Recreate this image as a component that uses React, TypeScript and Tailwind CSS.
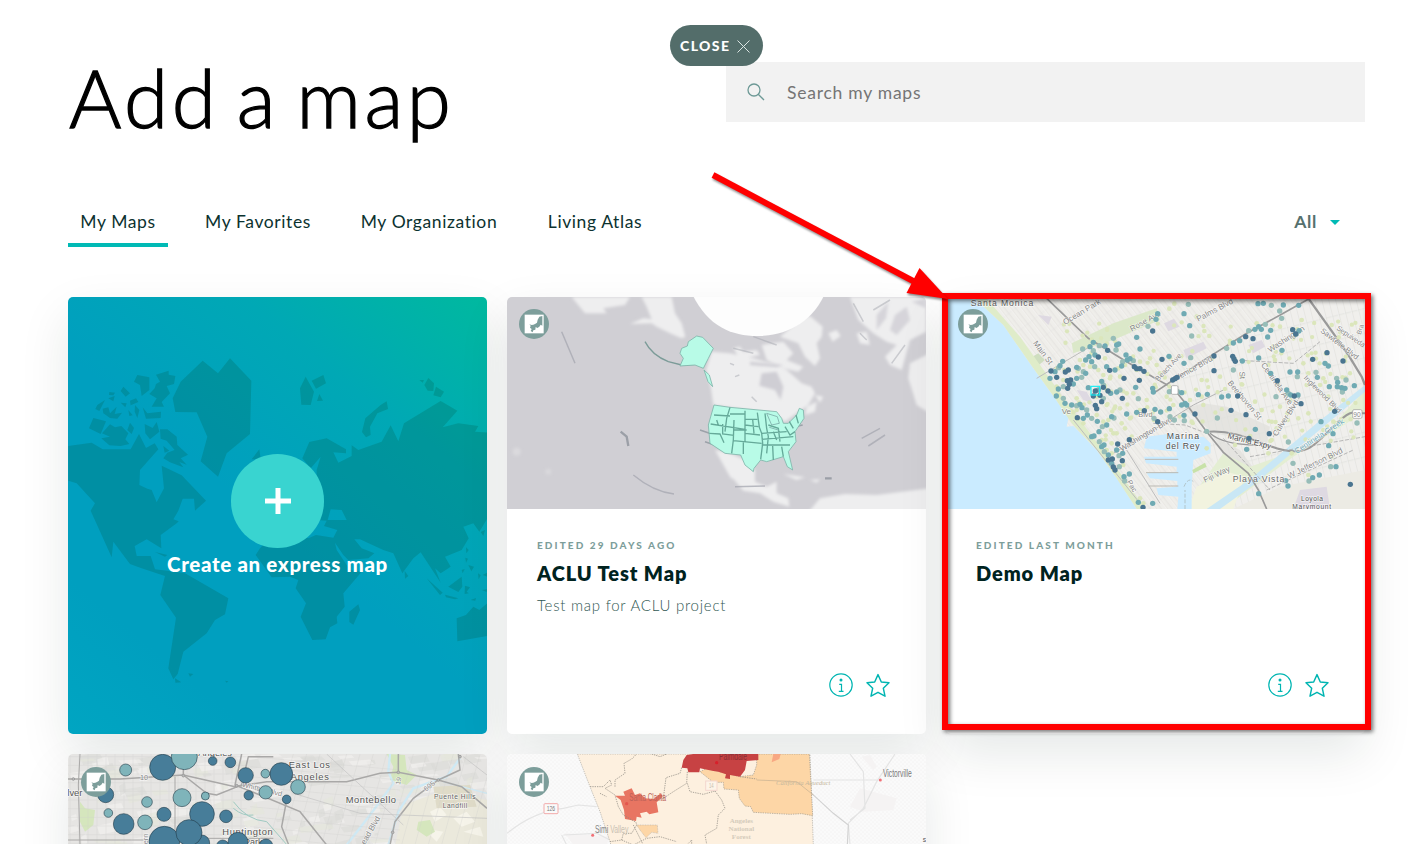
import type { ReactNode } from "react";

function randomizer(seed: number) {
  let s = seed;
  return () => {
    s = (s * 16807) % 2147483647;
    return s / 2147483647;
  };
}

const LAND =
  "M25,468 L95,458 L128,478 L212,478 L237,432 L258,474 L284,460 L295,478 L240,540 L238,585 L262,596 L275,600 L290,637 L312,595 L305,527 L365,556 L438,632 L405,662 L402,626 L368,626 L355,662 L340,688 L356,694 L350,700 L302,735 L304,775 L260,748 L224,768 L230,798 L272,798 L285,838 L320,842 L375,850 L505,925 L495,973 L465,990 L440,1030 L370,1085 L353,1152 L340,1168 L325,1135 L348,983 L301,915 L315,858 L245,835 L210,822 L160,755 L155,802 L92,662 L105,640 L50,580 L25,572 Z M803,690 L812,658 L845,660 L860,690 Z M727,505 L748,456 L800,445 L858,478 L858,490 L820,487 L835,518 L875,498 L875,466 L895,480 L965,455 L992,406 L1015,454 L1032,400 L1142,333 L1192,362 L1148,412 L1195,400 L1255,408 L1245,425 L1285,428 L1285,680 L1258,725 L1240,700 L1210,710 L1226,745 L1205,780 L1155,800 L1172,830 L1142,850 L1125,835 L1142,878 L1082,787 L1060,805 L1027,850 L1000,790 L970,780 L900,748 L883,748 L905,775 L943,790 L925,805 L865,810 L850,795 L825,758 L830,780 L870,840 L905,845 L850,910 L854,950 L830,980 L832,1000 L810,1012 L797,1048 L757,1050 L722,980 L738,940 L707,895 L715,870 L690,860 L635,862 L587,795 L600,775 L650,720 L745,745 L768,735 L820,743 L832,720 L792,708 L800,692 L770,690 L770,540 L782,500 L752,535 Z";

const ISLANDS =
  "M428,212 L474,250 L510,205 L574,272 L570,432 L500,490 L474,560 L422,514 L442,440 L410,367 L346,366 L338,325 L362,275 Z M575,508 L598,478 L602,508 Z M737,260 L720,295 L724,344 L752,345 L762,305 Z M755,272 L790,255 L798,280 L768,296 Z M778,312 L789,332 L771,333 Z M962,345 L980,334 L984,357 L952,370 L930,410 L932,435 L918,442 L906,426 L916,385 Z M1078,270 L1092,270 L1088,278 Z M1105,264 L1122,280 L1120,303 L1103,302 L1093,285 Z M1128,290 L1152,305 L1142,322 L1120,316 Z M232,255 L268,262 L268,300 L245,318 L240,285 L222,275 Z M288,254 L326,242 L326,254 L346,258 L342,282 L320,288 L330,310 L305,336 L312,350 L275,350 L290,325 L268,312 L284,295 L288,282 L300,275 Z M248,352 L262,370 L303,365 L302,384 L258,386 Z M190,290 L210,310 L197,320 L182,303 Z M148,306 L165,308 L160,316 L147,315 Z M145,325 L164,318 L160,334 Z M112,345 L135,330 L118,363 L106,357 Z M128,356 L145,352 L150,370 L170,350 L164,372 L186,368 L172,386 L150,384 L130,370 Z M182,338 L200,340 L196,352 Z M210,332 L228,325 L235,336 L212,346 Z M225,345 L238,360 L232,384 L224,365 Z M205,360 L218,376 L208,378 Z M100,384 L138,394 L122,432 L87,415 Z M150,403 L165,412 L184,408 L205,430 L196,448 L208,462 L182,468 L148,466 L124,445 L150,440 L126,430 Z M210,398 L222,414 L215,432 L202,420 Z M254,402 L278,414 L290,396 L298,425 L270,448 L256,430 Z M300,418 L322,418 L350,440 L352,465 L384,494 L362,505 L380,524 L358,516 L370,532 L330,517 L310,505 L322,488 L344,480 L320,452 L302,446 Z M310,468 L328,482 L314,488 Z M285,786 L322,795 L315,800 Z M895,943 L900,960 L880,1004 L868,996 L868,965 Z M1034,843 L1045,858 L1035,866 Z M1100,865 L1148,908 L1140,915 Z M1155,914 L1195,925 L1185,928 L1158,922 Z M1165,890 L1205,860 L1207,890 L1195,906 Z M1215,887 L1230,892 L1220,905 L1226,910 L1214,912 Z M1190,985 L1218,975 L1240,950 L1258,960 L1282,940 L1282,1038 L1192,1054 Z M1218,772 L1226,780 L1219,790 Z M1216,803 L1224,806 L1218,818 Z M1225,825 L1242,830 L1234,844 Z M1205,840 L1214,837 L1208,850 Z M1254,850 L1262,856 L1256,868 Z M1268,855 L1282,848 L1282,860 Z M1262,726 L1275,720 L1270,738 Z M345,1165 L364,1177 L346,1178 Z M385,1150 L400,1152 L390,1160 Z M495,1172 L505,1174 L500,1178 Z M1232,930 L1248,924 L1246,932 Z M1266,900 L1281,898 L1280,906 Z";

function WorldArt() {
  return (
    <svg className="absolute inset-0 h-full w-full" viewBox="24 21 1257 1311" preserveAspectRatio="none">
      <g fill="#005f50" fillOpacity=".25" fillRule="evenodd">
        <path d={LAND} />
        <path d={ISLANDS} />
      </g>
    </svg>
  );
}

function NorthAmericaMap() {
  return (
    <svg className="block h-[212px] w-full" viewBox="21 21 1257 636" preserveAspectRatio="none">
      <defs>
        <filter id="soft" x="-5%" y="-5%" width="110%" height="110%">
          <feGaussianBlur stdDeviation="4.5" />
        </filter>
        <filter id="softer" x="-5%" y="-5%" width="110%" height="110%">
          <feGaussianBlur stdDeviation="2.2" />
        </filter>
      </defs>
      <rect x="21" y="21" width="1257" height="636" fill="#d0cfd4" />
      <g fill="#eeeeef" filter="url(#soft)">
        <path d="M215,21 L390,21 L375,45 L310,55 L320,70 L255,70 Z" />
        <path d="M425,21 L515,21 L525,70 L545,100 L556,140 L545,145 L515,132 L470,110 L455,100 L390,102 L430,85 L455,88 L440,50 Z" />
        <path d="M635,185 L690,190 L760,205 L830,225 L860,240 L885,262 L905,280 L935,290 L945,310 L925,345 L890,370 L855,395 L820,372 L640,345 L632,290 L618,240 Z" />
        <path d="M700,175 L720,170 L730,185 L770,180 L780,195 L720,208 Z M785,165 L850,155 L880,190 L860,210 L910,230 L895,245 L850,235 L800,210 Z" />
        <path d="M905,85 L930,78 L968,110 L965,140 L950,160 L960,205 L945,228 L915,200 L895,160 L840,140 Z" />
        <path d="M985,130 L1010,120 L1022,138 L998,155 Z M1050,21 L1278,21 L1278,125 L1230,150 L1215,205 L1205,240 L1170,225 L1155,200 L1190,165 L1160,155 L1120,130 L1075,90 Z M1070,130 L1100,125 L1110,165 L1080,160 Z" />
        <path d="M1230,220 L1290,190 L1290,370 L1250,345 L1225,265 Z" />
        <path d="M645,480 L690,490 L735,510 L765,540 L765,575 L800,590 L830,575 L830,610 L865,625 L868,650 L820,635 L780,610 L730,602 L695,560 L675,510 L700,570 L690,560 Z" />
        <path d="M925,667 L960,625 L1035,612 L1130,615 L1290,595 L1290,667 Z M850,552 L915,562 L890,570 Z M930,570 L960,568 L950,578 Z" />
        <path d="M920,350 L950,335 L945,365 L915,375 Z M945,315 L970,320 L960,338 Z" />
        <circle cx="50" cy="485" r="12" fillOpacity=".35" />
        <circle cx="145" cy="545" r="9" fillOpacity=".3" />
      </g>
      <g fill="#cfced4" filter="url(#soft)">
        <path d="M785,250 L830,245 L850,290 L842,330 L825,300 L778,287 Z" />
        <path d="M750,215 L850,225 L830,232 L750,225 Z" />
        <path d="M1185,75 L1220,50 L1230,90 L1190,135 L1170,120 Z M1130,75 L1165,35 L1158,85 L1130,120 Z M1235,35 L1278,25 L1278,55 Z" fillOpacity=".8" />
      </g>
      <path d="M578,15 C625,110 695,138 772,138 C850,138 930,105 973,15 Z" fill="#fdfdfd" filter="url(#softer)" />
      <g stroke="#5f8a85" fill="none" filter="url(#softer)" opacity=".75">
        <path d="M435,155 Q455,195 505,215 L545,225 L600,222" strokeWidth="4" />
        <path d="M600,420 L635,432 M615,455 L650,467 M885,410 L908,405" strokeWidth="5" stroke="#8b939b" />
      </g>
      <g stroke="#a6a7b0" strokeWidth="4.5" fill="none" filter="url(#softer)">
        <path d="M185,125 L225,220 M400,555 Q460,605 522,612 M1085,445 L1140,415 M1105,468 L1155,435 M705,590 L795,588" strokeOpacity=".75" />
        <path d="M362,425 L380,440 L385,468 M975,565 H995" stroke="#8d949b" strokeWidth="7" strokeOpacity=".8" />
        <path d="M760,140 L830,165 M700,175 L760,190 M1060,40 L1090,95 M1120,60 L1170,30 M1175,220 L1215,165 M1080,130 L1100,150 M690,220 L702,225 M755,320 L770,335 M705,260 L718,255" strokeOpacity=".5" />
      </g>
      <g fill="#b8fbe7" stroke="#7fb5aa" strokeWidth="2.5" filter="url(#softer)">
        <path d="M590,138 L608,142 L640,175 L625,205 L610,235 L585,225 L540,228 L550,205 L540,190 L545,175 L562,168 L565,155 Z" />
        <path d="M612,240 L628,255 L638,290 L624,275 Z" />
        <path d="M642,345 L690,352 L830,365 L845,385 L850,400 L865,400 L890,375 L898,355 L910,360 L912,385 L885,425 L888,455 L865,485 L878,540 L862,530 L850,500 L800,515 L782,510 L762,535 L760,545 L735,525 L722,495 L675,490 L630,460 L625,405 Z" />
      </g>
      <path
        d="M642,375 L690,378 M690,352 L680,385 L675,425 M632,402 L735,418 M628,430 L660,432 L672,458 M668,402 V432 L702,436 M702,390 L700,450 L695,490 M735,362 V455 M737,388 H772 M735,405 L775,410 M702,420 H740 M735,430 L780,435 M700,452 L785,460 M730,455 V492 M772,368 L778,412 L785,430 L788,460 L782,508 M795,370 L800,415 L805,440 L800,490 M785,430 L860,425 M785,448 L880,440 M785,465 L870,465 M805,405 L835,415 L840,455 M820,425 L830,450 M818,468 L820,510 M845,470 L850,500 M855,410 L870,435 L885,425 M868,395 L880,415 M888,375 L895,400 M690,372 H735 M650,390 L655,405 M758,388 L762,430"
        stroke="#65a999"
        strokeWidth="4"
        fill="none"
        filter="url(#softer)"
      />
      <path d="M800,370 L832,380 L838,400 L815,405 Z M808,412 L835,420" stroke="#86b9b2" strokeWidth="3" fill="none" filter="url(#softer)" />
    </svg>
  );
}

const DARK_DOTS =
  "638,123 503,181 475,201 385,240 376,246 333,243 382,272 392,270 388,283 383,295 509,241 552,265 598,271 583,230 590,236 600,236 612,244 666,208 698,270 705,266 711,262 822,242 822,198 939,146 917,140 1058,119 1067,132 878,199 882,207 886,214 1012,272 1118,208 1161,188 1209,213 893,318 873,361 918,374 988,431 927,445 1184,364 1083,341 1063,318 653,395 613,362 547,325 504,303 466,346 470,356 485,335 412,383 533,462 547,512 517,507 520,531 525,540 568,449 505,510 1231,583 609,652 466,303 460,318 480,316 765,372 350,262 490,292";
const MID_DOTS =
  "745,43 732,71 749,107 755,138 653,71 648,88 624,109 590,142 600,177 428,177 450,170 460,157 478,167 530,165 536,162 528,180 558,195 562,210 548,215 545,228 570,206 580,212 687,199 732,220 752,203 880,159 899,152 926,122 945,118 956,110 976,103 964,118 983,141 994,46 954,41 970,40 1019,63 1030,45 1076,46 1025,85 992,121 1077,122 1069,132 1026,181 956,204 880,240 907,213 1050,246 1072,260 1073,246 992,250 1008,320 1074,315 1040,300 1045,310 1052,315 1132,262 1128,247 1155,220 1165,228 1190,265 1193,277 1205,293 1218,270 1243,287 1192,290 1207,306 1168,290 1143,395 1251,399 1179,431 1166,467 1045,456 946,418 920,478 800,424 845,321 865,318 832,384 802,313 775,314 733,392 732,376 688,356 690,380 725,345 662,366 642,385 638,295 640,306 688,305 700,300 587,292 595,326 590,367 560,372 522,384 515,380 500,405 487,410 477,425 472,394 455,385 430,385 442,375 440,360 426,353 420,343 410,347 395,345 375,340 370,325 349,318 355,297 370,290 400,282 410,265 425,262 445,293 437,250 430,245 410,232 437,210 415,235 360,227 368,214 356,233 345,245 330,265 464,230 455,215 485,274 490,285 512,310 530,306 540,300 465,195 447,200 460,182 500,230 525,240 520,145 495,168 475,300 490,325 455,440 462,438 478,455 485,470 492,465 493,485 505,495 530,480 537,497 548,490 515,520 538,530 552,560 568,552 554,573 638,640 595,637 1059,520 1037,572 1044,588 1107,573 1118,563 1138,555 1172,530 1188,530 956,611 703,390 645,358 725,308 713,305 735,340 740,345 860,175 1215,295";
const PALE_DOTS =
  "688,56 703,41 793,123 808,138 770,80 870,160 1020,110 1060,145 1000,170 1005,210 985,225 1090,220 1105,250 1100,285 1140,285 1150,265 1210,330 1165,320 1040,315 1020,350 965,360 945,335 1010,415 1075,385 1105,370 1150,420 1180,395 995,450 885,465 790,345 750,330 785,320 755,395 700,345 680,320 660,250 650,225 630,205 600,215 590,240 555,225 540,260 535,235 495,205 475,240 450,230 430,225 420,210 490,255 510,265 560,310 580,310 620,330 540,355 590,370 570,385 545,400 555,415 520,430 530,430 575,440 490,395 505,390 430,400 415,385 470,375 410,360 395,365 350,290 370,270 500,300 485,450 515,460 500,480 515,490 550,525 600,625 610,640 1055,490 1175,500 1105,555 985,490 800,475 1085,90 1175,105 950,100 750,240 785,270 840,260 905,260 530,180 455,190 410,325 470,320 500,345 600,360";

function parseDots(list: string) {
  return list.split(" ").map((pair) => pair.split(",").map(Number));
}

function Label({
  x,
  y,
  size = 24,
  rotate = 0,
  fill = "#888",
  children,
  length,
}: {
  x: number;
  y: number;
  size?: number;
  rotate?: number;
  fill?: string;
  children: string;
  length?: number;
}) {
  return (
    <text
      x={x}
      y={y}
      fontSize={size}
      fill={fill}
      textLength={length}
      fontFamily="'Liberation Sans', sans-serif"
      transform={`rotate(${rotate} ${x} ${y})`}
      stroke="#fff"
      strokeOpacity=".65"
      strokeWidth="4"
      paintOrder="stroke"
    >
      {children}
    </text>
  );
}

function VeniceMap() {
  const rnd = randomizer(41);
  const scatter = Array.from({ length: 150 }, () => {
    const x = 350 + rnd() * 900;
    const y = 90 + rnd() * 370;
    return [x, y];
  }).filter(([x, y]) => x > 0.8 * y + 100 && (y < 400 || x > 800 || x < 600));
  return (
    <svg className="block h-[212px] w-full" viewBox="18 21 1257 636" preserveAspectRatio="none">
      <defs>
        <pattern id="blocksA" width="26" height="60" patternUnits="userSpaceOnUse" patternTransform="rotate(-38)">
          <rect width="26" height="60" fill="#efeeea" />
          <path d="M0,0 H26 M0,0 V60" stroke="#fff" strokeWidth="4" />
          <path d="M2,2 H26 M3,0 V60 M15,0 V60" stroke="#dad9d5" strokeWidth="1.6" />
        </pattern>
        <pattern id="blocksB" width="20" height="72" patternUnits="userSpaceOnUse" patternTransform="rotate(-14)">
          <rect width="20" height="72" fill="#f0efec" />
          <path d="M0,0 H20 M0,0 V72" stroke="#fff" strokeWidth="4" />
          <path d="M2,2 H20 M3,0 V72" stroke="#d5d4d0" strokeWidth="1.8" />
        </pattern>
      </defs>
      <rect x="18" y="21" width="1257" height="636" fill="url(#blocksA)" />
      <path d="M700,280 L1100,21 H1275 V657 H850 L800,425 Z" fill="url(#blocksB)" />
      <path d="M730,355 L790,340 L860,350 L990,410 L980,460 L820,430 Z M820,440 L900,480 L960,560 L870,520 Z" fill="#e0dfdc" fillOpacity=".7" />
      <path d="M880,657 L1020,590 L1275,540 V657 Z" fill="#ecebe4" />
      <path d="M1060,657 L1080,600 L1160,590 L1170,657 Z" fill="#ded9e2" />
      <path d="M395,160 L520,100 L650,55 L660,90 L520,150 L400,190 Z" fill="#dbe8c9" />
      <path d="M672,100 L702,86 L718,110 L685,124 Z M730,180 L790,155 L800,175 L740,205 Z M925,165 L965,150 L975,170 L940,190 Z M295,75 L335,80 L325,105 Z M410,300 L440,305 L460,340 L430,330 Z" fill="#ded9e2" />
      <path d="M270,205 L295,190 L315,210 L290,230 Z" fill="#cfdec0" />
      <path d="M770,600 L850,490 L930,530 L1130,460 L1275,300 V365 L1060,500 L850,657 H750 Z" fill="#e4eed3" />
      <path d="M745,657 L770,590 L860,545 L915,560 L880,657 Z" fill="#f2f3df" />
      <path d="M800,657 L930,568 L1130,400 L1275,285 V305 L1145,415 L940,585 L840,657 Z" fill="#c9e7f5" />
      <path d="M18,21 H100 L190,105 L280,235 L345,325 L385,385 L380,410 L400,408 L470,480 L530,565 L590,657 H18 Z" fill="#caebff" />
      <path d="M100,21 L190,105 L280,235 L345,325 L395,400 L470,480 L530,565 L590,657 H615 L545,555 L450,430 L360,310 L240,140 L135,21 Z" fill="#dfecc9" />
      <path d="M620,440 L700,430 L720,445 L790,440 L812,460 L812,490 L760,510 L755,590 V657 H712 L715,620 L655,615 L650,595 L712,590 V573 L630,565 L620,550 L710,545 V530 L618,520 L612,500 L710,500 V485 L612,475 Z" fill="#caebff" />
      <path d="M757,540 L795,518 L800,530 L760,550 Z" fill="#c8e2a8" />
      <path d="M615,508 H715 M618,548 H715 M625,588 H715" stroke="#bbb9b2" strokeWidth="3" />
      <path d="M732,590 Q745,560 760,575 M735,657 V600" stroke="#b2c5ca" strokeWidth="3" strokeDasharray="12 5" fill="none" />
      <g fill="none" stroke="#9a9a9a">
        <path d="M320,25 L445,145 L560,215 L640,262 L700,295 L745,350 L800,425 L850,487 L925,550 L955,600 L980,657" strokeWidth="5" />
        <path d="M640,310 L700,270 L800,205 L920,130 L1030,70 L1110,25" strokeWidth="5" />
        <path d="M1105,25 L1180,130 L1225,195 L1265,260 L1275,285" strokeWidth="7" />
        <path d="M808,425 C900,420 960,465 1030,480 S1120,470 1180,410 S1240,370 1275,370" strokeWidth="6" />
        <path d="M810,430 Q850,465 950,465" strokeWidth="4" />
        <path d="M520,490 L640,420 L760,345 L850,300" strokeWidth="3" stroke="#b5b5b5" />
        <path d="M400,390 L600,640 M290,265 L450,170 M560,480 L660,640" strokeWidth="3" stroke="#bdbdbd" />
        <path d="M640,400 L735,405 L800,430 M850,445 L990,600 M1000,440 L1080,320 M930,500 L1275,440 M880,210 L1060,220 L1140,155 M980,600 L1240,480" strokeWidth="2.5" stroke="#aaa" strokeDasharray="12 5" />
      </g>
      <g fill="#dbe6bb">
        {scatter.map(([x, y], i) => (
          <circle key={i} cx={x} cy={y} r="6.5" />
        ))}
        {parseDots(PALE_DOTS).map(([x, y], i) => (
          <circle key={i} cx={x} cy={y} r="7" />
        ))}
      </g>
      <Label x={278} y={160} rotate={53}>Main St</Label>
      <Label x={375} y={105} rotate={-31}>Ocean Park</Label>
      <Label x={575} y={125} rotate={-29}>Rose Ave</Label>
      <Label x={775} y={95} rotate={-28}>Palms Blvd</Label>
      <Label x={710} y={272} rotate={-29}>Venice Blvd</Label>
      <Label x={655} y={275} rotate={-47} size={22}>Beach Ave</Label>
      <Label x={990} y={188} rotate={-33}>Washington</Label>
      <Label x={1140} y={125} rotate={38} size={23}>Sawtelle Blvd</Label>
      <Label x={1188} y={118} rotate={34} size={22} length={98}>Sepulveda</Label>
      <Label x={1262} y={135} rotate={-72} size={20}>Bra</Label>
      <Label x={862} y={280} rotate={50}>Beethoven St</Label>
      <Label x={962} y={225} rotate={55}>Centinela Ave</Label>
      <Label x={898} y={245} rotate={85}>St</Label>
      <Label x={1090} y={265} rotate={45} size={22}>Inglewood Blvd</Label>
      <Label x={1010} y={440} rotate={-57}>Culver Blvd</Label>
      <Label x={545} y={485} rotate={-31}>Washington Blvd</Label>
      <Label x={595} y={382} rotate={0} size={22}>Blvd</Label>
      <Label x={1070} y={492} rotate={-33} fill="#73aebe">Centinela Creek</Label>
      <Label x={1048} y={566} rotate={-26} length={180}>W Jefferson Blvd</Label>
      <Label x={795} y={578} rotate={-25}>Fiji Way</Label>
      <Label x={862} y={445} rotate={14} fill="#555">Marina Expy</Label>
      <Label x={560} y={575} rotate={60} size={22}>Pac</Label>
      <Label x={365} y={372}>Ve</Label>
      <g fill="#97bdb8">
        {parseDots(MID_DOTS).filter((_, i) => i % 3 === 0).map(([x, y], i) => (
          <circle key={i} cx={x} cy={y} r="8" />
        ))}
      </g>
      <g fill="#6faab3">
        {parseDots(MID_DOTS).filter((_, i) => i % 3 !== 0).map(([x, y], i) => (
          <circle key={i} cx={x} cy={y} r="8" />
        ))}
      </g>
      <g fill="#4a7590">
        {parseDots(DARK_DOTS).map(([x, y], i) => (
          <circle key={i} cx={x} cy={y} r="8" />
        ))}
      </g>
      <rect x="453" y="289" width="26" height="26" fill="none" stroke="#14eef5" strokeWidth="3.5" />
      <rect x="1238" y="359" width="28" height="26" rx="4" fill="#fff" stroke="#999" strokeWidth="2" />
      <Label x={1240} y={380} size={20}>90</Label>
      <rect x="694" y="287" width="20" height="26" rx="4" fill="#fff" stroke="#999" strokeWidth="2" />
      <Label x={92} y={47} size={26} fill="#5e5e5e" length={188}>Santa Monica</Label>
      <Label x={680} y={446} size={26} fill="#4e4e4e" length={97}>Marina</Label>
      <Label x={677} y={478} size={26} fill="#4e4e4e" length={102}>del Rey</Label>
      <Label x={878} y={577} size={26} fill="#6a6a6a" length={155}>Playa Vista</Label>
      <Label x={1083} y={634} size={20} fill="#555" length={66}>Loyola</Label>
      <Label x={1057} y={657} size={20} fill="#555" length={116}>Marymount</Label>
    </svg>
  );
}

const BUBBLES: [number, number, number, boolean][] = [
  [137, 149, 24, true],
  [197, 75, 18, false],
  [308, 67, 39, true],
  [373, 35, 39, false],
  [458, 48, 13, true],
  [511, 52, 16, true],
  [557, 91, 23, true],
  [616, 86, 13, false],
  [664, 87, 34, true],
  [714, 126, 22, false],
  [617, 142, 20, false],
  [566, 151, 14, true],
  [680, 163, 13, true],
  [366, 158, 27, false],
  [436, 153, 12, false],
  [261, 171, 16, false],
  [145, 204, 13, false],
  [191, 237, 31, true],
  [255, 232, 22, false],
  [312, 208, 21, true],
  [426, 207, 37, true],
  [498, 214, 19, true],
  [313, 290, 46, true],
  [425, 294, 24, true],
  [387, 263, 39, true],
  [488, 303, 18, true],
  [534, 292, 30, true],
  [618, 302, 20, true],
];

function LosAngelesMap() {
  const rnd = randomizer(97);
  const patches = Array.from({ length: 190 }, () => [24 + rnd() * 1257, 27 + rnd() * 290, 10 + rnd() * 55, 5 + rnd() * 25, rnd()]);
  return (
    <svg className="block h-[212px] w-full" viewBox="24 27 1257 636" preserveAspectRatio="none">
      <rect x="24" y="27" width="1257" height="636" fill="#e6e5e3" />
      {patches.map(([x, y, w, h, t], i) => (
        <path
          key={i}
          d={`M${x},${y} l${w},${-h * 0.4} l${w * 0.2},${h} l${-w},${h * 0.4} Z`}
          fill={t > 0.65 ? "#f3f2f0" : t > 0.3 ? "#dbdad7" : "#e4e6da"}
          opacity=".6"
        />
      ))}
      <path d="M1030,180 L1140,140 L1281,165 V330 H1000 Z" fill="#ebe9dc" />
      <path d="M1110,200 l30,-15 l20,25 l-35,20 Z M1180,220 l40,-20 l25,30 l-40,15 Z M1090,250 l60,10 l-20,30 Z M1210,260 l50,-15 l10,30 Z" fill="#f6f4ea" />
      <path d="M1120,125 L1230,120 L1250,185 L1130,190 Z" fill="#dfdbc8" />
      <path d="M980,27 L1035,30 L1040,75 L1070,90 L1040,120 L990,105 L1000,65 Z M60,170 L75,190 L105,195 L100,240 L75,260 L60,230 Z M1075,230 L1110,225 L1125,260 L1100,275 L1070,255 Z" fill="#d5e6bd" />
      <g fill="none" stroke="#cfe9f4" strokeWidth="7">
        <path d="M990,27 L985,80 L1000,115 L930,210 L860,300" />
        <path d="M1200,40 L1160,95 L1060,130 L1015,200 L985,300" />
        <path d="M1150,110 L1281,145" strokeWidth="4" />
      </g>
      <g stroke="#cfcecc" strokeWidth="1.5" opacity=".6">
        {Array.from({ length: 20 }, (_, i) => (
          <path key={i} d={`M${30 + i * 27},27 V320 M24,${35 + i * 26} H560`} />
        ))}
        {Array.from({ length: 16 }, (_, i) => (
          <path key={i} d={`M${700 + i * 40},27 l-80,290 M570,${35 + i * 30} l450,40`} />
        ))}
      </g>
      <path d="M520,170 Q560,225 620,230 L690,310 M520,190 Q550,215 580,210" stroke="#9fcac2" strokeWidth="3" fill="none" />
      <g fill="none" stroke="#a9a8a7" strokeWidth="4.5">
        <path d="M24,102 H180 L370,90 L525,125 L620,110 H860 L960,85 L1015,82 L1135,105 L1205,125 L1281,190" />
        <path d="M370,27 V90 L440,145 L470,150 L545,120 L565,35 H640" />
        <path d="M545,27 L525,120 L600,150 L720,200 L800,300" />
        <path d="M680,165 L665,245 L690,310 M1015,27 V80" />
        <path d="M1195,27 L1200,75 L1135,105 L1060,160 L1005,230 L990,300" />
        <path d="M345,95 V300 M24,285 H280 M60,27 L55,120 L60,300 M440,280 H640" strokeWidth="3" />
        <path d="M1210,35 L1281,90 M700,145 L900,205 L1281,220 M800,27 L1030,240" strokeWidth="2" stroke="#c2c2c2" />
      </g>
      {[[40, 102], [370, 92], [530, 122], [1015, 82], [1135, 105], [1200, 35], [998, 262]].map(([x, y], i) => (
        <circle key={i} cx={x} cy={y} r="4" fill="#bbb" stroke="#999" strokeWidth="2.5" />
      ))}
      <Label x={240} y={106} size={22}>10</Label>
      <Label x={415} y={32} size={28} fill="#555">Angeles</Label>
      <Label x={545} y={125} size={22} rotate={14}>Whittier Blvd</Label>
      <Label x={686} y={68} size={28} fill="#555" length={124}>East Los</Label>
      <Label x={692} y={104} size={28} fill="#555" length={115}>Angeles</Label>
      <Label x={857} y={174} size={28} fill="#555" length={151}>Montebello</Label>
      <Label x={1122} y={163} size={20} fill="#666" length={125}>Puente Hills</Label>
      <Label x={1148} y={188} size={20} fill="#666" length={74}>Landfill</Label>
      <Label x={487} y={269} size={28} fill="#555" length={151}>Huntington</Label>
      <Label x={552} y={299} size={27} fill="#555">Park</Label>
      <Label x={22} y={152} size={28} fill="#555">lver</Label>
      <Label x={915} y={300} rotate={-60}>ead Blvd</Label>
      <Label x={1098} y={140} rotate={-38} size={22}>605</Label>
      <Label x={1020} y={120} rotate={-80} size={20}>19</Label>
      <Label x={265} y={298} rotate={-90} size={22}>ern</Label>
      {BUBBLES.map(([x, y, r, dark], i) => (
        <circle key={i} cx={x} cy={y} r={r} fill={dark ? "#477d99" : "#7fb4ba"} stroke="#223b48" strokeWidth="1.8" />
      ))}
    </svg>
  );
}

function Serif({ x, y, children }: { x: number; y: number; children: string }) {
  return (
    <text x={x} y={y} fontSize="21" fontWeight="700" textAnchor="middle" fill="#d4cbbb" fontFamily="'Liberation Serif', serif">
      {children}
    </text>
  );
}

function CountyMap() {
  const condensed = "'Liberation Sans Narrow', 'Liberation Sans', sans-serif";
  return (
    <svg className="block h-[212px] w-full" viewBox="21 27 1257 636" preserveAspectRatio="none">
      <defs>
        <pattern id="grain" width="12" height="12" patternUnits="userSpaceOnUse">
          <rect width="12" height="12" fill="#fafafa" />
          <circle cx="3" cy="3" r="1.7" fill="#eeeded" />
          <circle cx="9" cy="9" r="1.7" fill="#eeeded" />
        </pattern>
      </defs>
      <rect x="21" y="27" width="1257" height="636" fill="url(#grain)" />
      <path d="M1085,35 L1110,30 L1130,65 L1120,75 Z M1080,130 L1190,160 L1180,195 L1090,200 L1050,185 Z M195,265 L330,275 L320,300 H220 Z" fill="#f5f3f3" />
      <g fill="none" stroke="#e4e4e4" strokeWidth="3.5">
        <path d="M21,265 Q100,200 190,190 L235,180 L290,185 M190,270 L290,265 L330,285 M185,270 L200,300 M940,105 L1135,105 M1185,27 L1130,110 L1090,190 L1045,235 L1050,300 M1050,27 L1090,80 L1095,190 L1050,225" />
        <path d="M890,110 L935,145 L1000,205 L1045,240 L1042,300" stroke="#d2d2d2" />
      </g>
      <path d="M232,27 H930 L940,300 L940,400 H360 L330,290 L300,200 L270,125 Z" fill="#fdf0df" stroke="#aaa7a0" strokeWidth="2" strokeDasharray="4 3" />
      <path d="M770,27 H928 L938,212 L905,206 L870,208 L760,202 L752,185 L735,183 L718,160 L715,135 L672,132 L670,112 L640,112 L600,80 L620,70 L720,95 L760,90 L770,60 Z" fill="#fdd6a6" stroke="#9f998d" strokeWidth="2" strokeDasharray="4 3" />
      <path d="M550,45 L560,30 L580,27 H775 V45 L740,48 L735,75 L720,95 L690,90 L690,102 L675,100 L678,88 L655,80 L640,78 L600,70 L598,82 L565,82 L562,70 L545,68 Z" fill="#c74243" />
      <path d="M820,27 H842 L838,42 L815,52 Z" fill="#f8a883" />
      <path d="M345,152 L375,152 L370,140 L395,130 L405,150 L420,145 L435,160 L462,162 L482,145 L488,155 L470,172 L475,202 L448,208 L440,200 L420,205 L425,218 L410,215 L408,228 L375,222 L372,195 L362,165 Z" fill="#e87562" />
      <path d="M410,240 L472,240 L474,265 L455,262 L438,278 L420,255 Z" fill="#fdd6a6" stroke="#aaa" strokeWidth="1.5" strokeDasharray="3 2" />
      <g fill="none" stroke="#8d8981" strokeWidth="2.2" strokeDasharray="4 3">
        <path d="M270,125 H310 L330,105 L335,120 L315,130 L345,150 L355,185 L370,210 L408,232 L410,240 M345,125 L345,105 L375,85 L372,55 L395,42 L410,27 M455,27 L480,35 L500,27" />
        <path d="M545,68 L540,85 L498,98 L490,160 L520,140 L560,115 L562,80 M562,115 L570,140 L610,148 L645,138 M645,138 L665,165 L675,190 L655,210 L650,250 L615,270 L620,297 M330,290 L365,285 L370,265 L395,265 L410,240 M365,285 L400,300 L440,280 L480,275 L530,290 M720,95 L770,102 M480,160 H495 M400,240 L430,300 M300,145 L320,155 M560,300 L575,285 V300" />
        <path d="M770,105 L890,110 L940,150" stroke="#c8b293" strokeDasharray="none" />
      </g>
      <rect x="132" y="176" width="42" height="30" rx="3" fill="#fafafa" stroke="#f2aaaa" strokeWidth="3" />
      <text x="140" y="199" fontSize="22" fill="#777" textLength="25" lengthAdjust="spacingAndGlyphs" fontFamily={condensed}>126</text>
      <rect x="617" y="108" width="34" height="28" fill="#fdf4e8" stroke="#f4d7cf" strokeWidth="3" />
      <text x="627" y="130" fontSize="21" fill="#c6bcae" textLength="14" lengthAdjust="spacingAndGlyphs" fontFamily={condensed}>14</text>
      <g fontFamily={condensed} fontSize="30">
        <text x="657" y="45" fill="#882f35" textLength="84" lengthAdjust="spacingAndGlyphs">Palmdale</text>
        <text x="388" y="168" fill="#bb6158" textLength="110" lengthAdjust="spacingAndGlyphs">Santa Clarita</text>
        <text x="1149" y="96" fill="#777" textLength="86" lengthAdjust="spacingAndGlyphs">Victorville</text>
        <text x="285" y="264" fill="#858585" textLength="100" lengthAdjust="spacingAndGlyphs">
          Simi <tspan fill="#c9c0b2">Valley</tspan>
        </text>
        <text x="1268" y="292" fill="#555" fontSize="20">s</text>
      </g>
      <text x="828" y="119" fontSize="20" fontStyle="italic" fill="#c5b69d" textLength="163" fontFamily="'Liberation Serif', serif">California Aqueduct</text>
      <Serif x={724} y={234}>Angeles</Serif>
      <Serif x={724} y={258}>National</Serif>
      <Serif x={724} y={282}>Forest</Serif>
      <g fill="#f27076">
        <circle cx="1141" cy="105" r="4.5" />
        <circle cx="278" cy="271" r="4.5" />
        <circle cx="650" cy="53" r="5" fill="#d8202b" />
        <circle cx="380" cy="176" r="5" fill="#e4574e" />
      </g>
    </svg>
  );
}

function MapBadge({ className }: { className: string }) {
  return (
    <svg className={`absolute h-[30px] w-[30px] ${className}`} viewBox="0 0 90 90">
      <circle cx="45" cy="45" r="45" fill="#7d9e9b" />
      <rect x="17" y="17" width="57" height="56" fill="#fff" />
      <path d="M70,21 V50 L65,47 L61,53 L55,57 L50,54 L49,62 L43,64 L41,70 L35,66 L38,60 L33,56 L35,50 L31,46 L38,48 L43,47 L48,45 L54,41 L56,32 L61,23 Z" fill="#7d9e9b" />
    </svg>
  );
}

function InfoIcon() {
  return (
    <svg className="h-6 w-6" viewBox="0 0 24 24" fill="none" stroke="#00b5b2" strokeWidth="1.2">
      <circle cx="12" cy="12" r="11.2" />
      <circle cx="12" cy="7" r="1.5" fill="#00b5b2" stroke="none" />
      <path d="M10.2,11.3 H12.5 V18 M9.8,18.3 H14.5" />
    </svg>
  );
}

function StarIcon() {
  return (
    <svg className="h-6 w-6" viewBox="0 0 24 24" fill="none" stroke="#00b5b2" strokeWidth="1.45" strokeLinejoin="round">
      <path d="M12,1.6 L15.3,9 L23,9.8 L17.3,15.2 L19,23.2 L12,19.3 L5,23.2 L6.7,15.2 L1,9.8 L8.7,9 Z" />
    </svg>
  );
}

function MapCard({
  map,
  edited,
  title,
  description,
  badge = "left-[12px] top-[12px]",
}: {
  map: ReactNode;
  edited?: string;
  title?: string;
  description?: string;
  badge?: string;
}) {
  return (
    <article className="relative flex h-[437px] flex-col rounded-[5px] bg-white shadow-[0_20px_50px_rgba(0,35,30,0.1)]">
      <div className="overflow-hidden rounded-t-[5px]">{map}</div>
      <MapBadge className={badge} />
      <div className="flex flex-1 flex-col pt-[29px] pr-[36px] pb-[37px] pl-[30px]">
        <p className="text-[10px] leading-[14px] font-black tracking-[2.1px] text-[#7d9e9b]">{edited}</p>
        <h2 className="mt-[7px] text-[20px] leading-[28px] font-extrabold tracking-[0.9px] text-[#00231f]">{title}</h2>
        <p className="mt-[7px] text-[15px] leading-[22px] font-light tracking-[0.75px] text-[#2f5752]">{description}</p>
        <div className="mt-auto flex justify-end gap-[13px]">
          <InfoIcon />
          <StarIcon />
        </div>
      </div>
    </article>
  );
}

export default function App() {
  return (
    <div className="relative h-[844px] w-[1428px] overflow-hidden bg-white pr-[63px] pl-[68px] font-['Lato','Open_Sans',sans-serif]">
      <header className="flex h-[193px] items-start justify-between">
        <h1 className="mt-[47px] ml-px text-[80px] leading-[100px] font-light tracking-[3.6px] whitespace-nowrap text-black [-webkit-text-stroke:1.3px_black] [word-spacing:-8px]">
          Add a map
        </h1>
        <div className="mt-[62px] flex h-[60px] w-[639px] items-center bg-[#f2f2f2] pl-[21px]">
          <svg className="h-[18px] w-[18px]" viewBox="0 0 18 18" fill="none" stroke="#6d9996" strokeWidth="1.3">
            <circle cx="7" cy="7" r="6" />
            <path d="M11.2,11.2 L17,17" />
          </svg>
          <span className="mt-[3px] ml-[22px] text-[17.5px] tracking-[0.75px] text-[#757575]">Search my maps</span>
        </div>
      </header>

      <nav className="flex h-[54px] gap-[25px] text-center text-[17.5px] leading-[57px] tracking-[0.6px] whitespace-nowrap text-[#0c322f]">
        <a className="w-[100px] border-b-4 border-[#00bab5]">My Maps</a>
        <a className="w-[130px]">My Favorites</a>
        <a className="w-[162px]">My Organization</a>
        <a className="w-[120px]">Living Atlas</a>
        <button className="mt-[2px] mr-[25px] ml-auto flex items-center gap-[13px] font-bold text-[#56716e]">
          All
          <span className="mt-[2px] border-x-[5px] border-t-[5px] border-x-transparent border-t-[#00bab5]" />
        </button>
      </nav>

      <main className="mt-[50px] grid grid-cols-[419px_419px_419px] gap-[20px]">
        <article className="relative flex h-[437px] flex-col items-center overflow-hidden rounded-[5px] bg-[linear-gradient(40deg,#00a5c2_0%,#009fbf_20%,#009fbf_48%,#00a8b5_74%,#00b99f_100%)] pt-[157px] shadow-[0_20px_50px_rgba(0,35,30,0.1)]">
          <WorldArt />
          <div className="relative flex h-[94px] w-[93px] items-center justify-center rounded-full bg-[#39d4d0]">
            <svg className="h-[26px] w-[26px]" viewBox="0 0 26 26" stroke="#fff" strokeWidth="5">
              <path d="M13,0 V26 M0,13 H26" />
            </svg>
          </div>
          <p className="relative mt-[2px] text-[20.5px] leading-[28px] font-black tracking-[0.65px] text-white">Create an express map</p>
        </article>
        <MapCard map={<NorthAmericaMap />} edited="EDITED 29 DAYS AGO" title="ACLU Test Map" description="Test map for ACLU project" />
        <MapCard map={<VeniceMap />} edited="EDITED LAST MONTH" title="Demo Map" />
        <MapCard map={<LosAngelesMap />} badge="left-[13px] top-[13px]" />
        <MapCard map={<CountyMap />} badge="left-[12px] top-[13px]" />
      </main>

      <button className="absolute top-[25px] left-[670px] flex h-[41px] w-[93px] items-center rounded-full bg-[#4a6562]/95 pl-[10px] text-[14px] font-black tracking-[1.4px] text-white">
        CLOSE
        <svg className="mt-[2px] ml-[7px] h-[13px] w-[13px]" viewBox="0 0 13 13" stroke="#dbe5e3" strokeWidth="1">
          <path d="M.5,.5 L12.5,12.5 M12.5,.5 L.5,12.5" />
        </svg>
      </button>

      <div className="absolute top-[293px] left-[942px] h-[437px] w-[429px] border-[6px] border-[#ff0000] drop-shadow-[2px_2px_2px_rgba(0,0,0,0.55)]" />
      <svg className="absolute top-[160px] left-[700px] h-[150px] w-[260px] drop-shadow-[1px_2px_1px_rgba(0,0,0,0.45)]" viewBox="0 0 260 150">
        <path d="M13,15 L215,122" stroke="#ff0000" strokeWidth="6" />
        <path d="M219.5,108 L248,139 L206.5,133 Z" fill="#ff0000" />
      </svg>
    </div>
  );
}
